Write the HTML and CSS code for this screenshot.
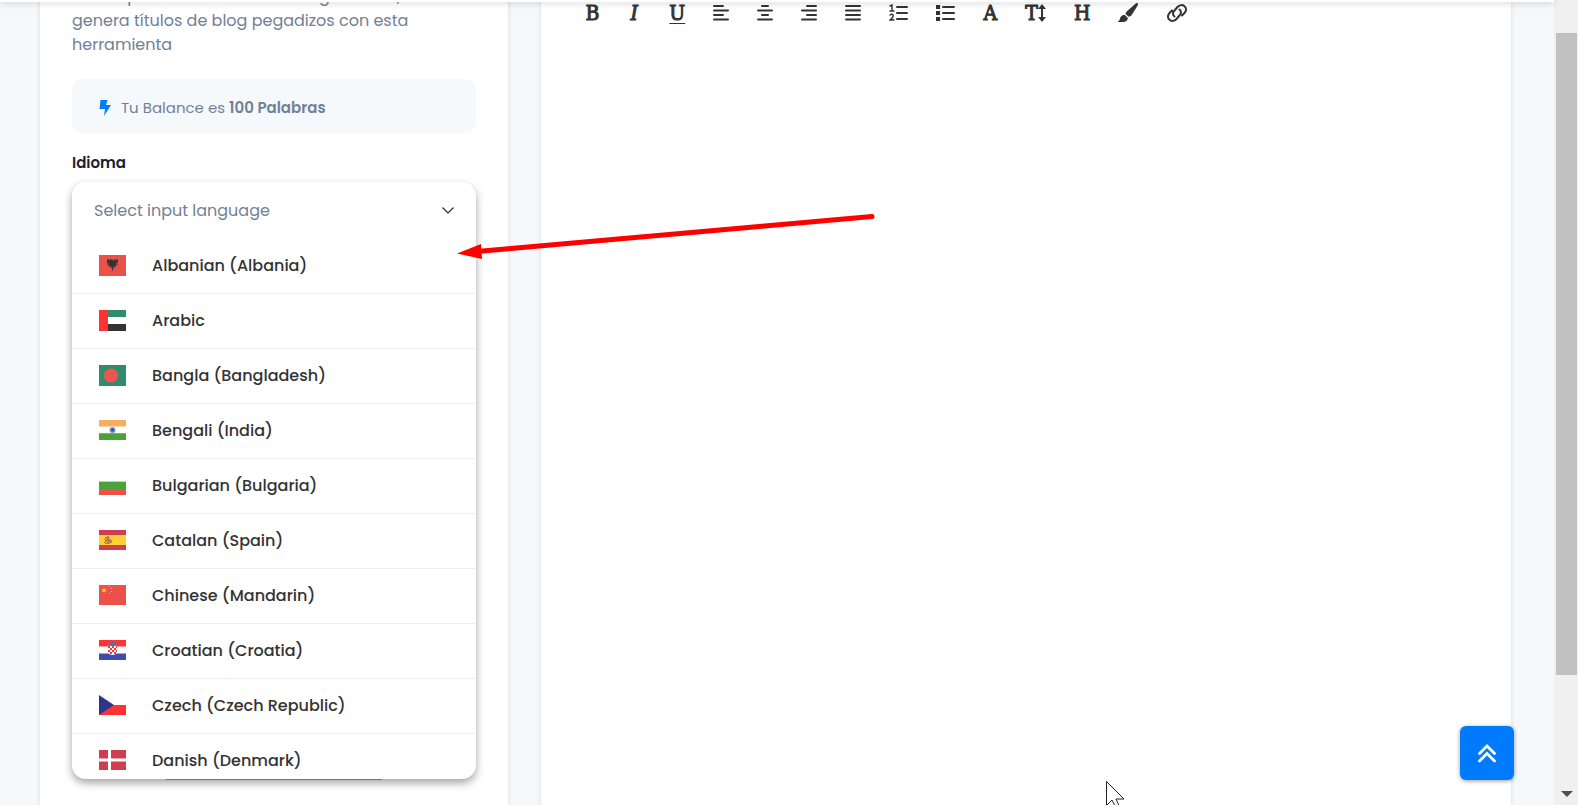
FILE: index.html
```html
<!DOCTYPE html>
<html lang="es">
<head>
    <meta charset="UTF-8">
    <meta name="viewport" content="width=device-width, initial-scale=1.0">
    <title>Títulos de blog</title>
    <link rel="stylesheet" href="styles.css">
</head>
<body>
    <div class="page">
        <header class="topbar"></header>
        <main class="content">
            <section class="card tool-card">
                <p class="description">Olvida pensar tus títulos de blog a mano,<br>genera títulos de blog pegadizos con esta herramienta</p>
                <div class="balance">
                    <svg class="bolt" viewBox="0 0 12 16"><path d="M1.500 0h7L7 5h5L5 16l1-7H.500z" fill="#007bff"/></svg>
                    <span>Tu Balance es <strong>100 Palabras</strong></span>
                </div>
                <label class="field-label" for="language">Idioma</label>
                <div class="dropdown">
                    <div class="dropdown-head">
                        <select id="language">
                            <option>Select input language</option>
                        </select>
                        <svg class="chevron" viewBox="0 0 12 7"><path d="M.5.5 6 6 11.500.5" fill="none" stroke="#222" stroke-width="1.100"/></svg>
                    </div>
                    <ul class="options" role="listbox" aria-labelledby="language">
                        <li role="option">
                            <svg class="flag" viewBox="0 0 27 21"><path fill="#ea5148" d="M0 0h27v21H0z"/><path fill="#333" d="M8 4l2 1 2-1 1 1 1 .5 1-.5 1-1 2 1 1-1v3l-1 1 1 2-2-.5v2l-1.500 1-1-.5-.5 2.500-.5 2-.5-2-.5-2.500-1 .5-1.500-1v-2L8 11l1-2-1-1z"/><path fill="#8b3c3a" d="M10 6h1v1h-1zM16 6h1v1h-1zM11 11h1v1h-1zM15 11h1v1h-1zM13 4h1v1h-1zM9 8h1v1H9zM17 8h1v1h-1z"/></svg>
                            Albanian (Albania)
                        </li>
                        <li role="option">
                            <svg class="flag" viewBox="0 0 27 21"><path fill="#fff" d="M0 0h27v21H0z"/><path fill="#338b6b" d="M9 0h18v7H9z"/><path fill="#333" d="M9 14h18v7H9z"/><path fill="#ff3334" d="M0 0h9v21H0z"/></svg>
                            Arabic
                        </li>
                        <li role="option">
                            <svg class="flag" viewBox="0 0 27 21"><path fill="#338b6b" d="M0 0h27v21H0z"/><circle cx="12" cy="10.500" r="7" fill="#ef5452"/></svg>
                            Bangla (Bangladesh)
                        </li>
                        <li role="option">
                            <svg class="flag" viewBox="0 0 27 21"><path fill="#fff" d="M0 0h27v20H0z"/><path fill="#fbab5d" d="M0 0h27v6.500H0z"/><path fill="#4aa336" d="M0 14h27v6H0z"/><path fill="#999" d="M0 13h27v1H0z"/><circle cx="13.500" cy="10" r="3" fill="#7b95d1"/><circle cx="13.500" cy="10" r="1.500" fill="#3548a0"/></svg>
                            Bengali (India)
                        </li>
                        <li role="option">
                            <svg class="flag" viewBox="0 0 27 21"><path fill="#fff" d="M0 0h27v21H0z"/><path fill="#4aa336" d="M0 7h27v7H0z"/><path fill="#ea5148" d="M0 14h27v6H0z"/><path fill="#ccc" d="M0 6h27v1H0z"/></svg>
                            Bulgarian (Bulgaria)
                        </li>
                        <li role="option">
                            <svg class="flag" viewBox="0 0 27 21"><path fill="#ce3d50" d="M0 0h27v20H0z"/><path fill="#ffd034" d="M0 5h27v10H0z"/><path fill="#c68040" d="M5 9h1V7h2V6h2v1h1v2h1v1h1v3h-2v1H6v-1H5v-1h1v-2H5z"/><path fill="#ffd034" d="M6 9h1v1H6zM10 8h1v1h-1zM7 12h1v1H7z"/><path fill="#8e8776" d="M8 8h1v2H8zM9 10h2v2H9z"/></svg>
                            Catalan (Spain)
                        </li>
                        <li role="option">
                            <svg class="flag" viewBox="0 0 27 21"><path fill="#ea5148" d="M0 0h27v20H0z"/><path fill="#ffd034" d="M5 2.500l.8 2H8L6.300 5.700 7 7.500 5 6.500 3 7.500l.7-1.800L2 4.500h2.200zM10 1h1v1h-1zM12 3h1v1h-1zM12 6h1v1h-1zM10 8h1v1h-1z"/></svg>
                            Chinese (Mandarin)
                        </li>
                        <li role="option">
                            <svg class="flag" viewBox="0 0 27 21"><path fill="#fff" d="M0 0h27v20H0z"/><path fill="#ff3334" d="M0 0h27v6.500H0z"/><path fill="#3f4caf" d="M0 13.500h27V20H0z"/><path fill="#fff" d="M9 5h9v7q-1 3-4.500 3T9 12z"/><path fill="#ff3334" d="M9 6h2v2H9zM13 6h2v2h-2zM11 8h2v2h-2zM15 8h2v2h-2zM9 10h2v2H9zM13 10h2v2h-2zM11 12h2v2h-2zM15 12h2v2h-2zM17 6h1v2h-1zM17 10h1v2h-1z"/><path fill="#5f7287" d="M9 3l2-.5 2.500-.5 2.500.5 2 .5-.5 3h-8z"/></svg>
                            Croatian (Croatia)
                        </li>
                        <li role="option">
                            <svg class="flag" viewBox="0 0 27 21"><path fill="#fff" d="M0 0h27v20H0z"/><path fill="#ff3334" d="M0 10h27v10H0z"/><path fill="#2f358c" d="M0 0l15 10L0 20z"/></svg>
                            Czech (Czech Republic)
                        </li>
                        <li role="option">
                            <svg class="flag" viewBox="0 0 27 21"><path fill="#ce3d50" d="M0 0h27v20H0z"/><path fill="#fff" d="M9 0h3v20H9zM0 8.500h27v3H0z"/></svg>
                            Danish (Denmark)
                        </li>
                    </ul>
                </div>
            </section>
            <section class="card editor-card">
                <div class="toolbar">
                    <button type="button" class="tool letter">B</button>
                    <button type="button" class="tool letter italic">I</button>
                    <button type="button" class="tool letter underline">U</button>
                    <button type="button" class="tool" aria-label="Align left"><svg width="16" height="18" viewBox="0 0 16 18"><path d="M1 2h9M1 6.500h14M1 11h9M1 15.500h14"/></svg></button>
                    <button type="button" class="tool" aria-label="Align center"><svg width="16" height="18" viewBox="0 0 16 18"><path d="M5 2h6M1 6.500h14M5 11h6M1 15.500h14"/></svg></button>
                    <button type="button" class="tool" aria-label="Align right"><svg width="16" height="18" viewBox="0 0 16 18"><path d="M6 2h9M1 6.500h14M6 11h9M1 15.500h14"/></svg></button>
                    <button type="button" class="tool" aria-label="Justify"><svg width="16" height="18" viewBox="0 0 16 18"><path d="M1 2h14M1 6.500h14M1 11h14M1 15.500h14"/></svg></button>
                    <button type="button" class="tool" aria-label="Ordered list"><svg width="19" height="18" viewBox="0 0 19 18"><path d="M8 3h10M8 9h10M8 15h10"/><path class="thin" d="M1 2l2-1v6M1 7h4M1 11q2-1.500 3 0t-3 5h4"/></svg></button>
                    <button type="button" class="tool" aria-label="Unordered list"><svg width="19" height="18" viewBox="0 0 19 18"><path d="M7 3h11M7 9h11M7 15h11"/><path class="dots" d="M2 3h.1M2 9h.1M2 15h.1"/></svg></button>
                    <button type="button" class="tool letter">A</button>
                    <button type="button" class="tool letter">T<svg width="8" height="18" viewBox="0 0 8 18"><path d="M4 3v12"/><path class="solid" d="M4 0l4 5H0zM4 18l4-5H0z"/></svg></button>
                    <button type="button" class="tool letter">H</button>
                    <button type="button" class="tool" aria-label="Color"><svg width="20" height="20" viewBox="0 0 20 20"><path class="solid" d="M19.500.3c.8.6.5 1.500 0 2.500L14 11.500c-.9 1.500-2 2-3.300 2.300L7.500 11c.2-1.300.8-2.300 2-3.300L17.500.8c.7-.6 1.400-.9 2-.5zM6.500 11.800l3.300 2.900c.2 3-2 4.300-4.800 4.300H0c0-1.200 1.300-.7 1.700-2.500.3-2.500 2-4.700 4.800-4.700z"/></svg></button>
                    <button type="button" class="tool" aria-label="Link"><svg width="22" height="18" viewBox="0 0 22 18"><path d="M8.500 12.500c-2-1.500-2-4 0-6l3-3.500c2-2.200 5-2.500 7-.8 2 1.700 2 4.500.2 6.500L16 11.500M13.500 5.500c2 1.500 2 4 0 6l-3 3.500c-2 2.200-5 2.500-7 .8-2-1.700-2-4.500-.2-6.500L6 6.500"/></svg></button>
                </div>
            </section>
        </main>
    </div>

    <div class="scrollbar">
        <div class="thumb"></div>
        <div class="scroll-down"></div>
    </div>

    <button type="button" class="back-to-top" aria-label="Subir">
        <svg width="18" height="19" viewBox="0 0 18 19"><path d="M1.500 9.500L9 2l7.500 7.500M1.500 17L9 9.500l7.500 7.500" fill="none" stroke="#fff" stroke-width="2.800" stroke-linecap="round"/></svg>
    </button>

    <svg class="pointer-arrow" width="420" height="52" viewBox="0 0 420 52"><path d="M20 39.500L415 4.500" stroke="#f00" stroke-width="5" stroke-linecap="round"/><path d="M0 41.500L24 32l1 15z" fill="#f00"/></svg>
    <svg class="cursor" width="19" height="28" viewBox="0 0 19 28"><path d="M.5.5v24L6 19l4 8 3.500-1.500L10 18h8z" fill="#fff" stroke="#222"/></svg>
</body>
</html>
```

FILE: styles.css
```css
* {
    box-sizing: border-box;
}
body {
    font-family: Poppins, Inter, sans-serif;
    font-size: 16px;
    line-height: 24px;
    color: #728096;
    background-color: #f5f9fc;
    margin: 0;
    height: 100vh;
    display: flex;
    overflow: hidden;
}
button, select {
    font-family: inherit;
    border: none;
    padding: 0;
    background: none;
    cursor: pointer;
}
.page {
    flex: 1;
    display: flex;
    flex-direction: column;
    min-width: 0;
}
.topbar {
    flex: none;
    height: 2px;
    background-color: #fff;
    box-shadow: 0 1px 6px rgba(0, 0, 0, 0.3);
    position: relative;
    z-index: 5;
}
.content {
    flex: 1;
    display: grid;
    grid-template-columns: repeat(3, 1fr);
    gap: 33px;
    padding: 0 43px 0 40px;
    margin-top: -17px;
}
.card {
    background-color: #fff;
    box-shadow: 0 0 5px rgba(0, 0, 0, 0.12);
    padding: 0 32px;
}
.editor-card {
    grid-column: span 2;
    padding: 15px 44px;
}

/* Tool panel */
.description {
    margin: 0 0 22px;
}
.balance {
    display: flex;
    align-items: center;
    gap: 10px;
    height: 54px;
    padding: 3px 27px 0;
    border-radius: 10px;
    background-color: #f5f9fc;
    font-size: 15px;
}
.balance strong {
    font-weight: 600;
}
.bolt {
    width: 12px;
    height: 16px;
}
.field-label {
    display: block;
    margin: 18px 0 7px;
    font-size: 15px;
    font-weight: 600;
    color: #1e1e2d;
}
.dropdown {
    position: relative;
    border-radius: 14px;
    background-color: #fff;
    box-shadow: 0 4px 9px rgba(0, 0, 0, 0.36);
}
.dropdown::after {
    content: "";
    position: absolute;
    left: 94px;
    right: 94px;
    bottom: -1px;
    height: 1px;
    background-color: #777;
}
.dropdown-head {
    display: flex;
    align-items: center;
    height: 57px;
    padding: 0 22px;
}
.dropdown-head select {
    appearance: none;
    flex: 1;
    font-size: 16px;
    color: #728096;
}
.chevron {
    width: 12px;
    height: 7px;
}
.options {
    list-style: none;
    margin: 0;
    padding: 0;
    height: 540px;
    overflow: hidden;
    border-radius: 0 0 14px 14px;
}
.options li {
    display: flex;
    align-items: center;
    gap: 26px;
    height: 55px;
    padding: 0 27px 1px;
    border-bottom: 1px solid #eee;
    color: #333;
    font-weight: 500;
}
.flag {
    width: 27px;
    height: 21px;
}

/* Editor toolbar */
.toolbar {
    display: flex;
    align-items: center;
    gap: 28px;
    height: 26px;
}
.tool {
    display: flex;
    align-items: center;
    justify-content: center;
    color: #333;
}
.tool path {
    fill: none;
    stroke: currentColor;
    stroke-width: 2;
    stroke-linecap: round;
}
.tool .thin {
    stroke-width: 1.4;
}
.tool .dots {
    stroke-width: 4;
    stroke-linecap: square;
}
.tool .solid {
    fill: currentColor;
    stroke: none;
}
.letter {
    min-width: 14px;
    font-family: "DejaVu Serif Condensed", "DejaVu Serif", serif;
    font-size: 21px;
    line-height: 24px;
    -webkit-text-stroke: 1px #333;
}
.italic {
    font-style: italic;
}
.underline {
    text-decoration: underline;
    text-decoration-thickness: 1px;
    text-underline-offset: 3px;
}

/* Scrollbar */
.scrollbar {
    flex: none;
    width: 24px;
    padding: 33px 1px 8px 2px;
    display: flex;
    flex-direction: column;
    align-items: center;
    justify-content: space-between;
    background-color: #f0f0f1;
}
.thumb {
    width: 100%;
    height: 84%;
    background-color: #c1c1c1;
}
.scroll-down {
    border: 6px solid transparent;
    border-top-color: #505050;
    border-bottom: none;
}

.back-to-top {
    position: fixed;
    right: 64px;
    bottom: 25px;
    width: 54px;
    height: 54px;
    display: flex;
    align-items: center;
    justify-content: center;
    border-radius: 6px;
    background-color: #007bff;
    box-shadow: 0 1px 4px rgba(0, 0, 0, 0.4);
}
.pointer-arrow {
    position: fixed;
    left: 457px;
    top: 212px;
    z-index: 10;
}
.cursor {
    position: fixed;
    left: 1106px;
    top: 781px;
    z-index: 10;
}
```
